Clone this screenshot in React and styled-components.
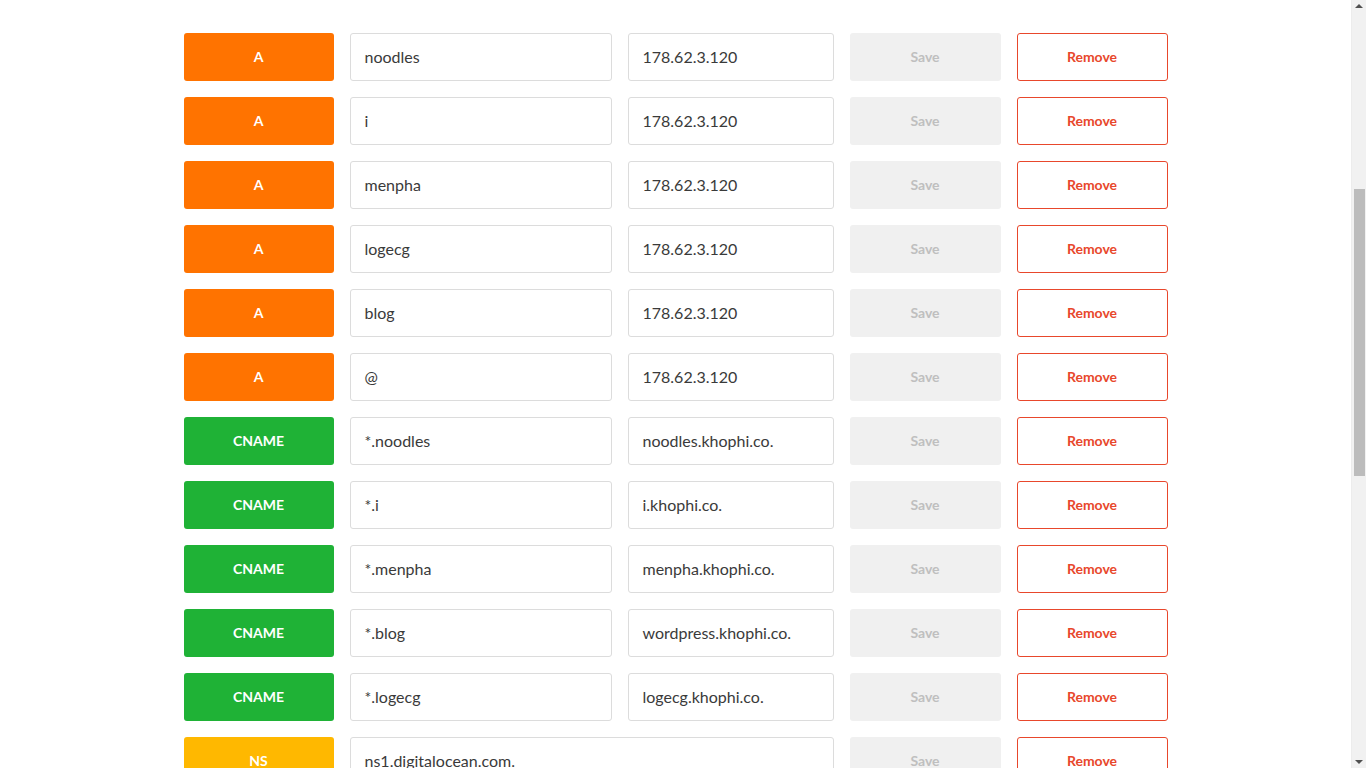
import React from "react";
import styled, { createGlobalStyle } from "styled-components";

const Global = createGlobalStyle`
  html, body { margin: 0; padding: 0; background: #fff; }
  body { font-family: Lato, "Open Sans", "Liberation Sans", sans-serif; color: #3c3c3c; }
  * { box-sizing: border-box; }
`;

const Page = styled.div`
  min-height: 2070px;
  padding-top: 33px;
  margin-right: 15px;
`;

const List = styled.div`
  width: 984px;
  margin: 0 auto;
  display: flex;
  flex-direction: column;
  gap: 16px;
`;

const Row = styled.div`
  display: grid;
  grid-template-columns: 150px 262px 206px 151px 151px;
  gap: 16px;
  height: 48px;
`;

const TYPE_COLORS = { A: "#ff7300", CNAME: "#1fb236", NS: "#ffb800" };

const Label = styled.div`
  border-radius: 3px;
  display: flex;
  align-items: center;
  justify-content: center;
  font-weight: 700;
  font-size: 14px;
  padding-bottom: 2px;
`;

const TypeBadge = styled(Label)`
  background: ${(p) => TYPE_COLORS[p.$type]};
  color: #fff;
`;

const Field = styled.div`
  border: 1px solid #dcdcdc;
  border-radius: 3px;
  display: flex;
  align-items: center;
  padding: 0 14px 2px;
  font-size: 16px;
  color: #3a3a3a;
  grid-column: ${(p) => (p.$wide ? "span 2" : "auto")};
  white-space: nowrap;
  overflow: hidden;
`;

const SaveButton = styled(Label)`
  background: #f0f0f0;
  color: #bfbfbf;
`;

const RemoveButton = styled(Label)`
  border: 1px solid #e8472c;
  color: #e8472c;
`;

const Scrollbar = styled.div`
  position: fixed;
  top: 0;
  right: 0;
  width: 15px;
  height: 100vh;
  background: #f1f1f1;
  border-left: 1px solid #ececec;
`;

const Arrow = styled.div`
  position: absolute;
  left: 3px;
  ${(p) => (p.$down ? "bottom: 4px;" : "top: 4px;")}
  width: 0;
  height: 0;
  border-left: 4px solid transparent;
  border-right: 4px solid transparent;
  ${(p) => (p.$down ? "border-top: 4px solid #505050;" : "border-bottom: 4px solid #505050;")}
`;

const Thumb = styled.div`
  position: absolute;
  left: 2px;
  width: 11px;
  top: 189px;
  height: 287px;
  background: #bcbcbc;
`;

const records = [
  ["A", "noodles", "178.62.3.120"],
  ["A", "i", "178.62.3.120"],
  ["A", "menpha", "178.62.3.120"],
  ["A", "logecg", "178.62.3.120"],
  ["A", "blog", "178.62.3.120"],
  ["A", "@", "178.62.3.120"],
  ["CNAME", "*.noodles", "noodles.khophi.co."],
  ["CNAME", "*.i", "i.khophi.co."],
  ["CNAME", "*.menpha", "menpha.khophi.co."],
  ["CNAME", "*.blog", "wordpress.khophi.co."],
  ["CNAME", "*.logecg", "logecg.khophi.co."],
  ["NS", "ns1.digitalocean.com."],
  ["NS", "ns2.digitalocean.com."],
  ["NS", "ns3.digitalocean.com."],
];

export default function App() {
  return (
    <>
      <Global />
      <Page>
        <List>
          {records.map(([type, name, value], i) => (
            <Row key={i}>
              <TypeBadge $type={type}>{type}</TypeBadge>
              {value === undefined ? (
                <Field $wide>{name}</Field>
              ) : (
                <>
                  <Field>{name}</Field>
                  <Field>{value}</Field>
                </>
              )}
              <SaveButton>Save</SaveButton>
              <RemoveButton>Remove</RemoveButton>
            </Row>
          ))}
        </List>
      </Page>
      <Scrollbar>
        <Arrow />
        <Thumb />
        <Arrow $down />
      </Scrollbar>
    </>
  );
}
